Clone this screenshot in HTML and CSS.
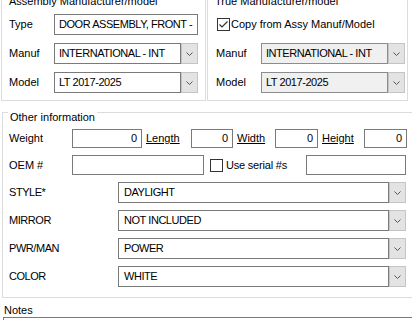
FILE: index.html
```html
<!DOCTYPE html>
<html>
<head>
<meta charset="utf-8">
<link rel="stylesheet" href="styles.css">
</head>
<body>
<div class="top">
  <div class="group g-assy">
    <span class="gtitle">Assembly Manufacturer/model</span>
    <div class="row"><span class="lbl">Type</span><div class="tb w144">DOOR ASSEMBLY, FRONT -</div></div>
    <div class="row"><span class="lbl">Manuf</span>
      <div class="combo w144"><div class="val">INTERNATIONAL - INT</div><div class="btn"><svg width="7" height="4" viewBox="0 0 7 4"><polyline points="0.5,0.5 3.5,3.5 6.5,0.5" fill="none" stroke="#555" stroke-width="1"/></svg></div></div>
    </div>
    <div class="row"><span class="lbl">Model</span>
      <div class="combo w144"><div class="val">LT 2017-2025</div><div class="btn"><svg width="7" height="4" viewBox="0 0 7 4"><polyline points="0.5,0.5 3.5,3.5 6.5,0.5" fill="none" stroke="#555" stroke-width="1"/></svg></div></div>
    </div>
  </div>
  <div class="group g-true">
    <span class="gtitle">True Manufacturer/model</span>
    <div class="row"><span class="chk on"><svg width="11" height="11" viewBox="0 0 11 11"><polyline points="1.5,5.5 4,8 9.5,2.5" fill="none" stroke="#333" stroke-width="1.2"/></svg></span><span class="chklbl">Copy from Assy Manuf/Model</span></div>
    <div class="row"><span class="lbl">Manuf</span>
      <div class="combo w144 dis"><div class="val">INTERNATIONAL - INT</div><div class="btn"><svg width="7" height="4" viewBox="0 0 7 4"><polyline points="0.5,0.5 3.5,3.5 6.5,0.5" fill="none" stroke="#555" stroke-width="1"/></svg></div></div>
    </div>
    <div class="row"><span class="lbl">Model</span>
      <div class="combo w144 dis"><div class="val">LT 2017-2025</div><div class="btn"><svg width="7" height="4" viewBox="0 0 7 4"><polyline points="0.5,0.5 3.5,3.5 6.5,0.5" fill="none" stroke="#555" stroke-width="1"/></svg></div></div>
    </div>
  </div>
</div>

<div class="group g-other">
  <span class="gtitle">Other information</span>
  <div class="orow r19">
    <span class="olbl">Weight</span>
    <div class="tb num w70">0</div>
    <span class="ulbl l45">Length</span>
    <div class="tb num w42">0</div>
    <span class="ulbl l38">Width</span>
    <div class="tb num w43">0</div>
    <span class="ulbl l42">Height</span>
    <div class="tb num w43">0</div>
  </div>
  <div class="orow r20">
    <span class="olbl">OEM #</span>
    <div class="tb w132"></div>
    <span class="chk sm"></span>
    <span class="serlbl">Use serial #s</span>
    <div class="tb w100"></div>
  </div>
  <div class="orow">
    <span class="clbl">STYLE*</span>
    <div class="combo w288"><div class="val">DAYLIGHT</div><div class="btn"><svg width="7" height="4" viewBox="0 0 7 4"><polyline points="0.5,0.5 3.5,3.5 6.5,0.5" fill="none" stroke="#555" stroke-width="1"/></svg></div></div>
  </div>
  <div class="orow">
    <span class="clbl">MIRROR</span>
    <div class="combo w288"><div class="val">NOT INCLUDED</div><div class="btn"><svg width="7" height="4" viewBox="0 0 7 4"><polyline points="0.5,0.5 3.5,3.5 6.5,0.5" fill="none" stroke="#555" stroke-width="1"/></svg></div></div>
  </div>
  <div class="orow">
    <span class="clbl">PWR/MAN</span>
    <div class="combo w288"><div class="val">POWER</div><div class="btn"><svg width="7" height="4" viewBox="0 0 7 4"><polyline points="0.5,0.5 3.5,3.5 6.5,0.5" fill="none" stroke="#555" stroke-width="1"/></svg></div></div>
  </div>
  <div class="orow">
    <span class="clbl">COLOR</span>
    <div class="combo w288"><div class="val">WHITE</div><div class="btn"><svg width="7" height="4" viewBox="0 0 7 4"><polyline points="0.5,0.5 3.5,3.5 6.5,0.5" fill="none" stroke="#555" stroke-width="1"/></svg></div></div>
  </div>
</div>

<div class="notes">
  <div class="notes-lbl">Notes</div>
  <div class="notes-box"></div>
</div>
</body>
</html>
```

FILE: styles.css
```css
* { box-sizing: border-box; }
html, body { margin: 0; padding: 0; }
body {
  width: 412px;
  height: 320px;
  overflow: hidden;
  background: #ffffff;
  color: #000;
  font-family: "Liberation Sans", Arial, sans-serif;
  font-size: 11px;
  line-height: 15px;
}

.top {
  display: flex;
  margin-top: -4px;
}

.group {
  position: relative;
  border: 1px solid #dcdcdc;
}

.gtitle {
  position: absolute;
  top: -3px;
  left: 5px;
  padding: 0 2px;
  background: #ffffff;
  white-space: nowrap;
  line-height: 15px;
}

.g-assy {
  margin-left: 1px;
  width: 205px;
  height: 105px;
  padding: 17px 0 0 7px;
}

.g-true {
  margin-left: 1px;
  width: 201px;
  height: 105px;
  padding: 17px 0 0 8px;
}

.row {
  display: flex;
  align-items: center;
  height: 21px;
  margin-bottom: 8px;
}

.lbl {
  width: 45px;
  flex: none;
}

.tb {
  flex: none;
  height: 21px;
  border: 1px solid #7a7a7a;
  background: #fff;
  padding: 0 4px;
  display: flex;
  align-items: center;
  white-space: nowrap;
  overflow: hidden;
  letter-spacing: -0.45px;
}

.tb.num {
  justify-content: flex-end;
  padding-right: 4px;
  letter-spacing: 0;
}

.w144 { width: 144px; }
.w70 { width: 70px; }
.w42 { width: 42px; }
.w43 { width: 43px; }
.w132 { width: 132px; }
.w100 { width: 100px; }
.w288 { width: 288px; }

.combo {
  flex: none;
  display: flex;
  height: 21px;
}

.combo .val {
  flex: 1;
  border: 1px solid #7a7a7a;
  background: #fff;
  padding: 0 4px;
  display: flex;
  align-items: center;
  white-space: nowrap;
  overflow: hidden;
  letter-spacing: -0.45px;
}

.combo.w288 .val {
  padding-left: 5px;
}

.combo .btn {
  flex: none;
  width: 17px;
  border: 1px solid #c4c4c4;
  background: #e3e3e3;
  display: flex;
  align-items: center;
  justify-content: center;
}

.combo.dis .val {
  background: #f0f0f0;
  border-color: #8c8c8c;
}

.chk {
  flex: none;
  width: 13px;
  height: 13px;
  border: 1px solid #333;
  background: #fff;
  display: flex;
  align-items: center;
  justify-content: center;
}

.g-true .chk {
  margin-left: 1px;
}

.chklbl {
  margin-left: 1px;
  white-space: nowrap;
}

.g-other {
  margin: 11px 0 0 2px;
  width: 430px;
  height: 186px;
  padding: 16px 0 0 6px;
}

.orow {
  display: flex;
  align-items: center;
  height: 21px;
  margin-bottom: 7px;
}

.orow.r19 { height: 19px; }
.orow.r19 .tb { height: 19px; }
.orow.r20 { height: 20px; }
.orow.r20 .tb { height: 20px; }

.olbl {
  width: 63px;
  flex: none;
}

.ulbl {
  flex: none;
  margin-left: 4px;
  text-decoration: underline;
}

.l45 { width: 45px; }
.l38 { width: 38px; }
.l42 { width: 42px; }

.chk.sm {
  margin-left: 6px;
}

.serlbl {
  flex: none;
  width: 80px;
  margin-left: 3px;
  white-space: nowrap;
  letter-spacing: -0.2px;
}

.clbl {
  width: 109px;
  flex: none;
  letter-spacing: -0.45px;
}

.notes {
  padding-left: 4px;
}

.notes-lbl {
  margin-top: 5px;
  line-height: 14px;
}

.notes-box {
  margin-left: -1px;
  width: 420px;
  height: 4px;
  border: 1px solid #7a7a7a;
  border-bottom: none;
  background: #fff;
}
```
